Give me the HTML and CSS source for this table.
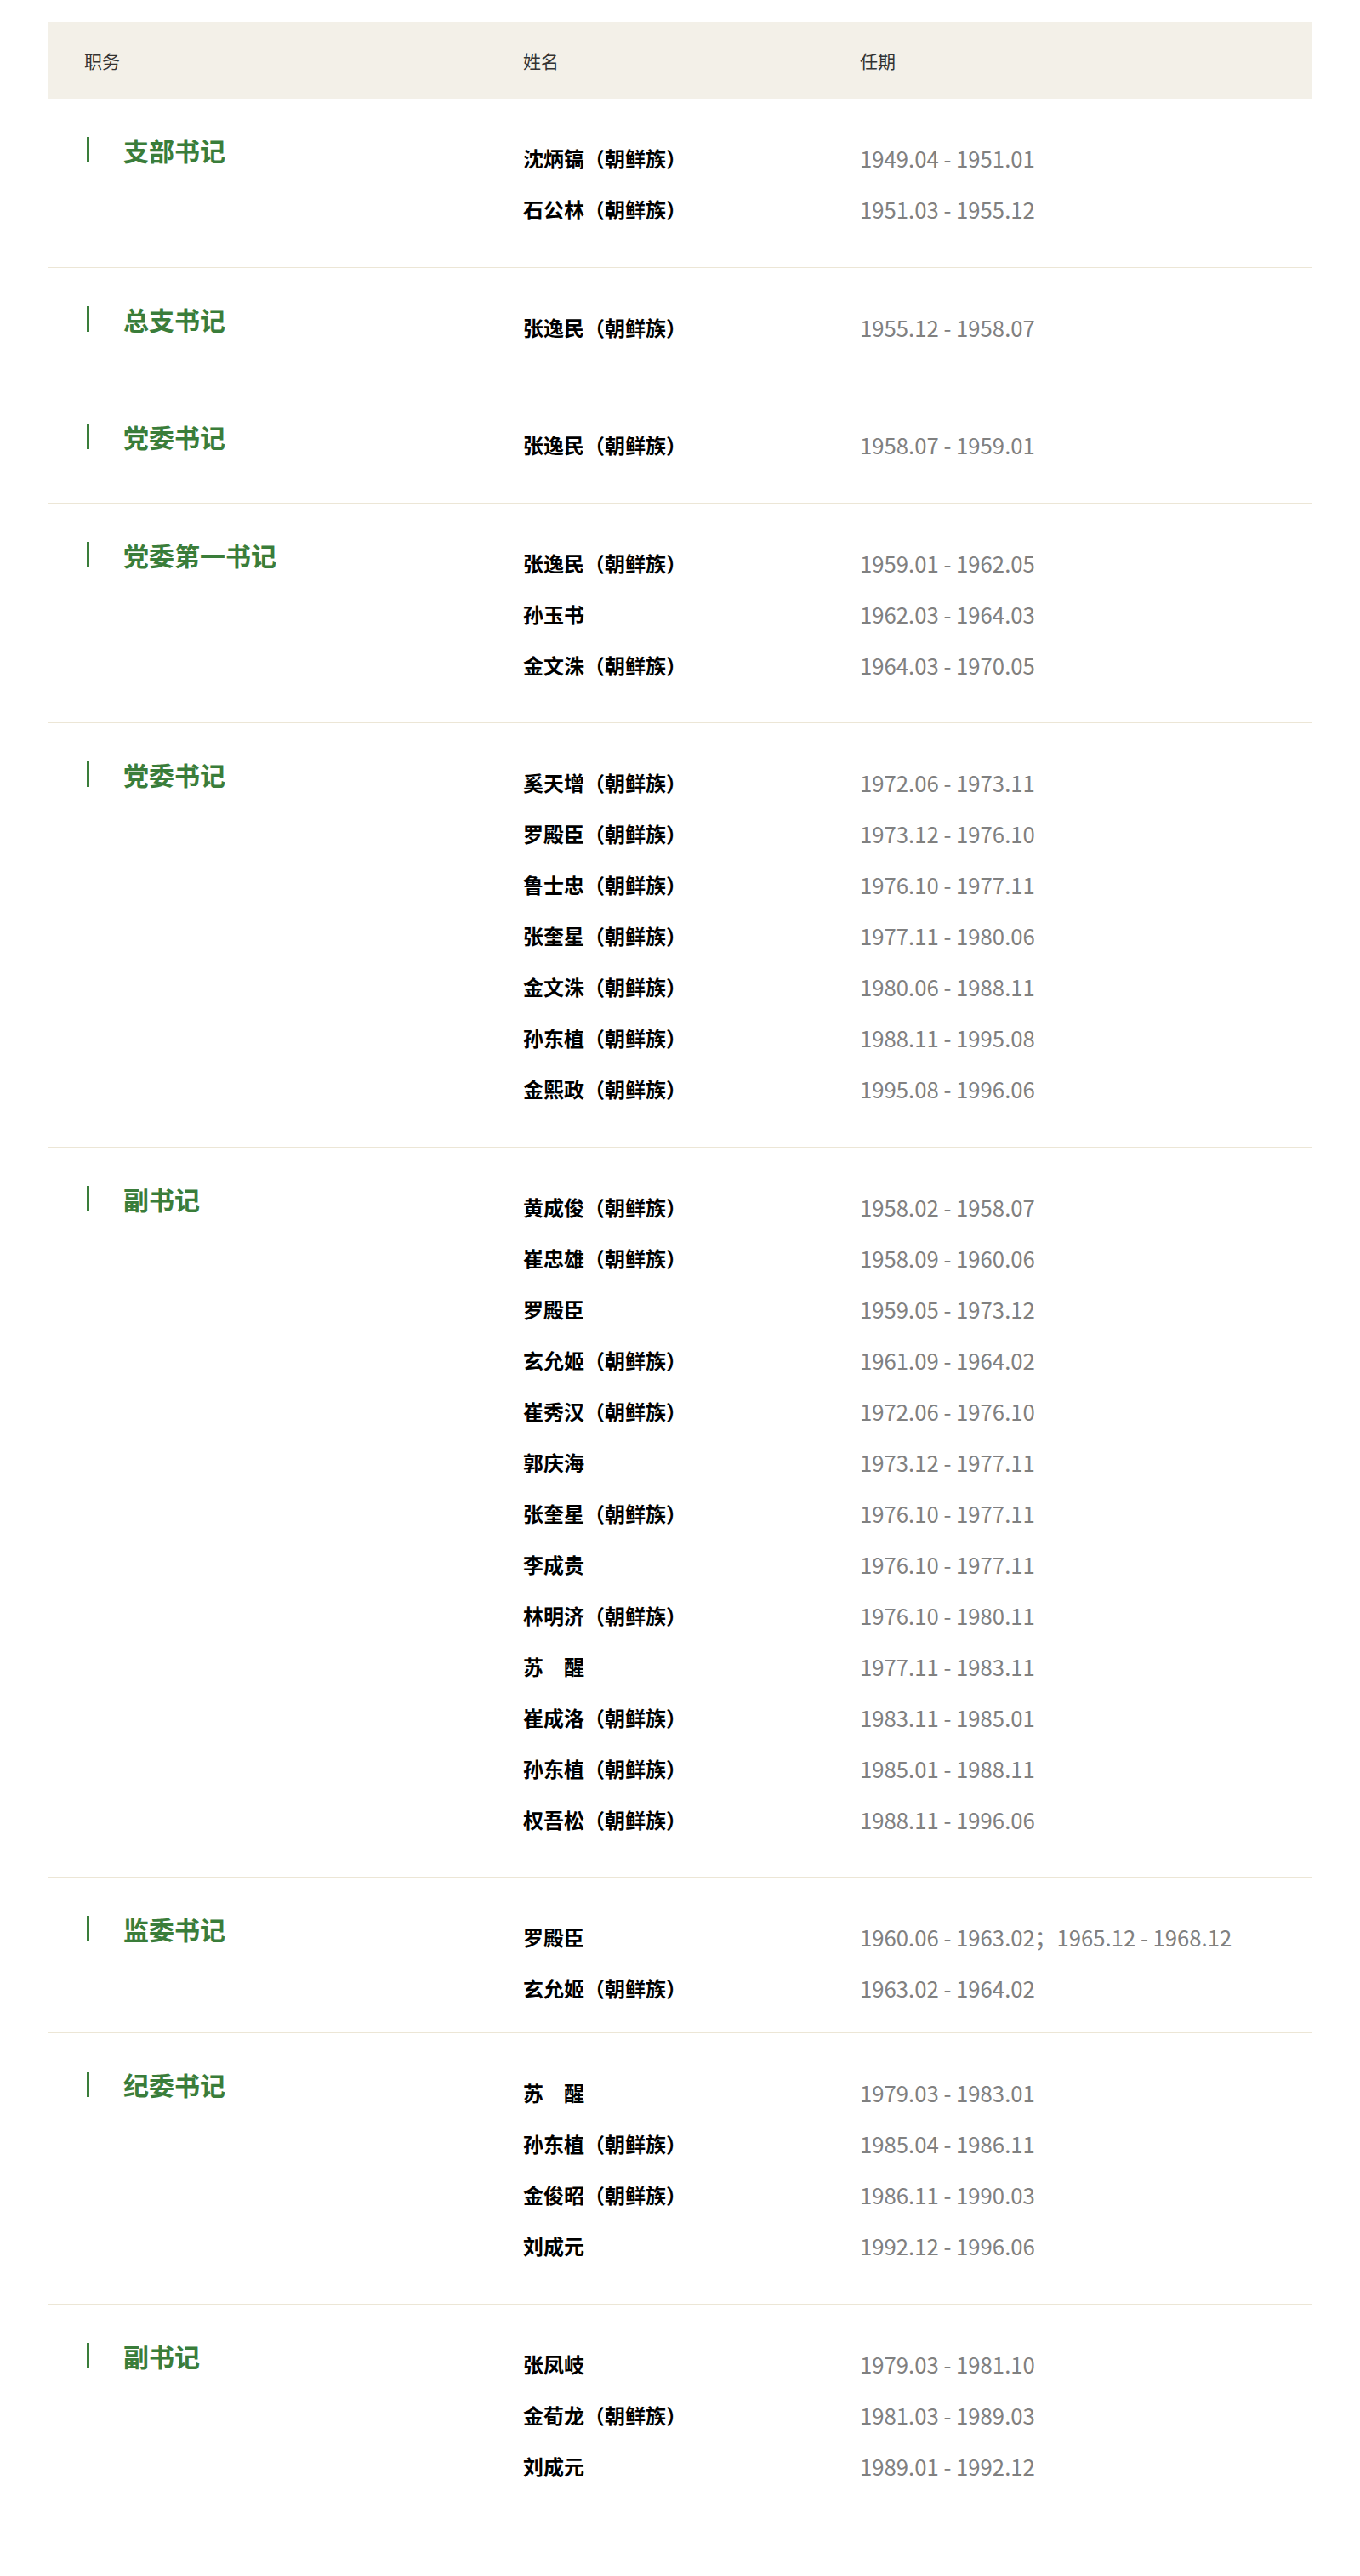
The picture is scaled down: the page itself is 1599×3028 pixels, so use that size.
FILE: index.html
```html
<!DOCTYPE html>
<html lang="zh-CN">
<head>
<meta charset="utf-8">
<title>历任书记</title>
<link rel="stylesheet" href="styles.css">
</head>
<body>
<div class="table">
  <div class="thead">
    <div class="th th-role">职务</div>
    <div class="th">姓名</div>
    <div class="th">任期</div>
  </div>

  <div class="group">
    <div class="role"><span class="role-name">支部书记</span></div>
    <div class="people">
      <div class="row"><span class="name">沈炳镐（朝鲜族）</span><span class="term">1949.04 - 1951.01</span></div>
      <div class="row"><span class="name">石公林（朝鲜族）</span><span class="term">1951.03 - 1955.12</span></div>
    </div>
  </div>

  <div class="group">
    <div class="role"><span class="role-name">总支书记</span></div>
    <div class="people">
      <div class="row"><span class="name">张逸民（朝鲜族）</span><span class="term">1955.12 - 1958.07</span></div>
    </div>
  </div>

  <div class="group">
    <div class="role"><span class="role-name">党委书记</span></div>
    <div class="people">
      <div class="row"><span class="name">张逸民（朝鲜族）</span><span class="term">1958.07 - 1959.01</span></div>
    </div>
  </div>

  <div class="group">
    <div class="role"><span class="role-name">党委第一书记</span></div>
    <div class="people">
      <div class="row"><span class="name">张逸民（朝鲜族）</span><span class="term">1959.01 - 1962.05</span></div>
      <div class="row"><span class="name">孙玉书</span><span class="term">1962.03 - 1964.03</span></div>
      <div class="row"><span class="name">金文洙（朝鲜族）</span><span class="term">1964.03 - 1970.05</span></div>
    </div>
  </div>

  <div class="group">
    <div class="role"><span class="role-name">党委书记</span></div>
    <div class="people">
      <div class="row"><span class="name">奚天增（朝鲜族）</span><span class="term">1972.06 - 1973.11</span></div>
      <div class="row"><span class="name">罗殿臣（朝鲜族）</span><span class="term">1973.12 - 1976.10</span></div>
      <div class="row"><span class="name">鲁士忠（朝鲜族）</span><span class="term">1976.10 - 1977.11</span></div>
      <div class="row"><span class="name">张奎星（朝鲜族）</span><span class="term">1977.11 - 1980.06</span></div>
      <div class="row"><span class="name">金文洙（朝鲜族）</span><span class="term">1980.06 - 1988.11</span></div>
      <div class="row"><span class="name">孙东植（朝鲜族）</span><span class="term">1988.11 - 1995.08</span></div>
      <div class="row"><span class="name">金熙政（朝鲜族）</span><span class="term">1995.08 - 1996.06</span></div>
    </div>
  </div>

  <div class="group">
    <div class="role"><span class="role-name">副书记</span></div>
    <div class="people">
      <div class="row"><span class="name">黄成俊（朝鲜族）</span><span class="term">1958.02 - 1958.07</span></div>
      <div class="row"><span class="name">崔忠雄（朝鲜族）</span><span class="term">1958.09 - 1960.06</span></div>
      <div class="row"><span class="name">罗殿臣</span><span class="term">1959.05 - 1973.12</span></div>
      <div class="row"><span class="name">玄允姬（朝鲜族）</span><span class="term">1961.09 - 1964.02</span></div>
      <div class="row"><span class="name">崔秀汉（朝鲜族）</span><span class="term">1972.06 - 1976.10</span></div>
      <div class="row"><span class="name">郭庆海</span><span class="term">1973.12 - 1977.11</span></div>
      <div class="row"><span class="name">张奎星（朝鲜族）</span><span class="term">1976.10 - 1977.11</span></div>
      <div class="row"><span class="name">李成贵</span><span class="term">1976.10 - 1977.11</span></div>
      <div class="row"><span class="name">林明济（朝鲜族）</span><span class="term">1976.10 - 1980.11</span></div>
      <div class="row"><span class="name">苏　醒</span><span class="term">1977.11 - 1983.11</span></div>
      <div class="row"><span class="name">崔成洛（朝鲜族）</span><span class="term">1983.11 - 1985.01</span></div>
      <div class="row"><span class="name">孙东植（朝鲜族）</span><span class="term">1985.01 - 1988.11</span></div>
      <div class="row"><span class="name">权吾松（朝鲜族）</span><span class="term">1988.11 - 1996.06</span></div>
    </div>
  </div>

  <div class="group group-tight">
    <div class="role"><span class="role-name">监委书记</span></div>
    <div class="people">
      <div class="row"><span class="name">罗殿臣</span><span class="term">1960.06 - 1963.02；1965.12 - 1968.12</span></div>
      <div class="row"><span class="name">玄允姬（朝鲜族）</span><span class="term">1963.02 - 1964.02</span></div>
    </div>
  </div>

  <div class="group">
    <div class="role"><span class="role-name">纪委书记</span></div>
    <div class="people">
      <div class="row"><span class="name">苏　醒</span><span class="term">1979.03 - 1983.01</span></div>
      <div class="row"><span class="name">孙东植（朝鲜族）</span><span class="term">1985.04 - 1986.11</span></div>
      <div class="row"><span class="name">金俊昭（朝鲜族）</span><span class="term">1986.11 - 1990.03</span></div>
      <div class="row"><span class="name">刘成元</span><span class="term">1992.12 - 1996.06</span></div>
    </div>
  </div>

  <div class="group">
    <div class="role"><span class="role-name">副书记</span></div>
    <div class="people">
      <div class="row"><span class="name">张凤岐</span><span class="term">1979.03 - 1981.10</span></div>
      <div class="row"><span class="name">金荀龙（朝鲜族）</span><span class="term">1981.03 - 1989.03</span></div>
      <div class="row"><span class="name">刘成元</span><span class="term">1989.01 - 1992.12</span></div>
    </div>
  </div>
</div>
</body>
</html>
```

FILE: styles.css
```css
html, body {
  margin: 0;
  padding: 0;
  background: #ffffff;
}

body {
  font-family: "Noto Sans CJK SC", "Noto Sans", sans-serif;
  color: #000;
}

.table {
  margin: 26px 56px 0 57px;
}

.thead {
  display: grid;
  grid-template-columns: 558px 396px 1fr;
  height: 90px;
  align-items: center;
  background: #f3f0e8;
}

.th {
  font-size: 21px;
  line-height: 30px;
  color: #333;
}

.th-role {
  padding-left: 42px;
}

.group {
  display: grid;
  grid-template-columns: 558px 1fr;
  padding: 40px 0 37.5px;
  border-bottom: 1px solid #ece6d6;
}

.group-tight {
  padding-bottom: 22px;
}

.group:last-child {
  border-bottom: none;
}

.role {
  padding-left: 45px;
  padding-top: 5px;
}

.role-name {
  display: block;
  border-left: 3px solid #3a7d3a;
  padding-left: 40px;
  height: 30px;
  line-height: 30px;
  font-size: 30px;
  font-weight: 700;
  color: #3a7d3a;
}

.people {
  display: flex;
  flex-direction: column;
}

.row {
  display: grid;
  grid-template-columns: 396px 1fr;
  height: 60px;
  align-items: center;
}

.name {
  font-size: 24px;
  font-weight: 700;
  color: #000;
  line-height: 30px;
}

.term {
  font-size: 25.7px;
  color: #808080;
  line-height: 30px;
}
```
